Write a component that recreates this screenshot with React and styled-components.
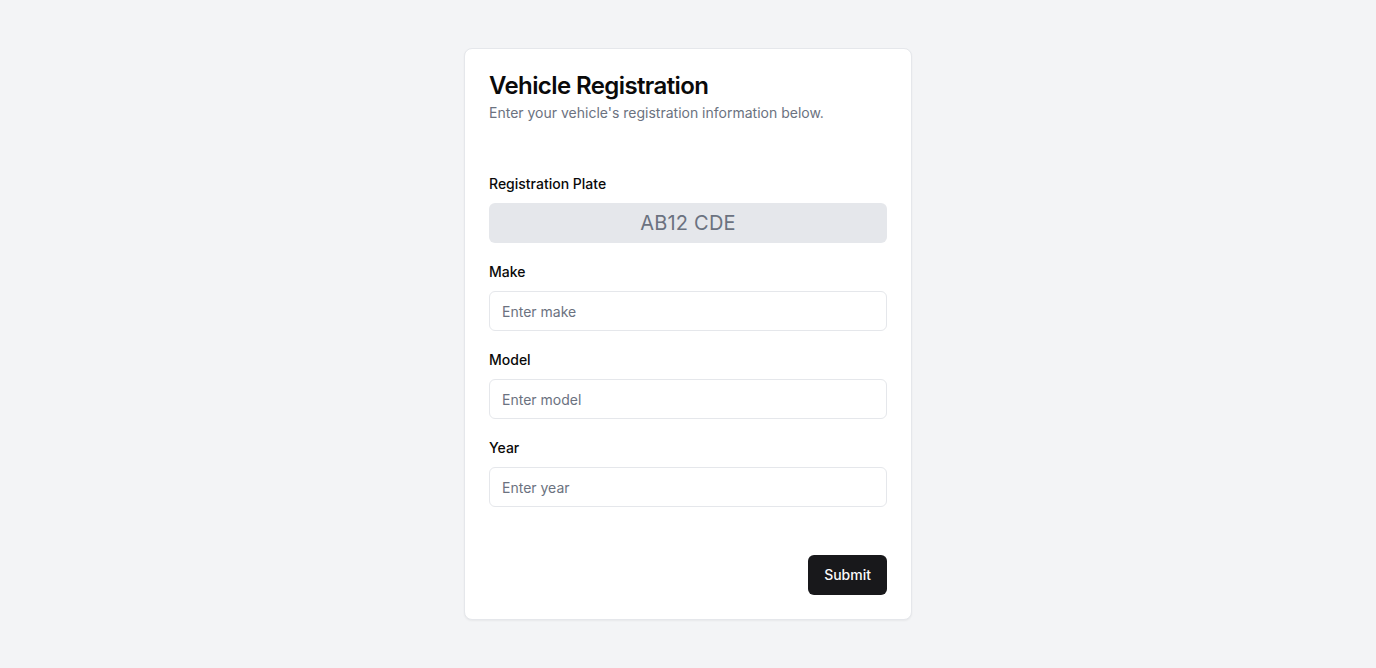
import React from 'react';
import styled, { createGlobalStyle } from 'styled-components';

const GlobalStyle = createGlobalStyle`
  * { box-sizing: border-box; }
  body {
    margin: 0;
    background: #f3f4f6;
    font-family: Inter, "Noto Sans", sans-serif;
    color: #0a0a0a;
  }
`;

const Page = styled.div`
  min-height: 668px;
  display: flex;
  justify-content: center;
  align-items: flex-start;
  padding-top: 48px;
`;

const Card = styled.form`
  width: 448px;
  background: #fff;
  border: 1px solid #e5e7eb;
  border-radius: 8px;
  box-shadow: 0 1px 2px rgba(0, 0, 0, 0.05);
  padding: 24px;
  display: flex;
  flex-direction: column;
`;

const Title = styled.h1`
  margin: 0;
  padding-top: 1px;
  font-size: 24px;
  line-height: 24px;
  font-weight: 600;
  letter-spacing: -0.6px;
`;

const Description = styled.p`
  margin: 5px 0 0;
  font-size: 14px;
  line-height: 20px;
  color: #6b7280;
`;

const Fields = styled.div`
  margin-top: 50px;
  display: flex;
  flex-direction: column;
  gap: 18px;
`;

const Field = styled.div`
  display: flex;
  flex-direction: column;
`;

const Label = styled.label`
  font-size: 14px;
  line-height: 20px;
  font-weight: 500;
  padding-top: 1px;
  margin-bottom: 9px;
`;

const Plate = styled.div`
  height: 40px;
  border-radius: 6px;
  background: #e5e7eb;
  color: #6b7280;
  font-size: 20px;
  display: flex;
  align-items: center;
  justify-content: center;
  letter-spacing: 0.2px;
`;

const Input = styled.input`
  height: 40px;
  border: 1px solid #e5e7eb;
  border-radius: 6px;
  padding: 0 12px;
  font-family: inherit;
  font-size: 14px;
  color: #0a0a0a;
  background: #fff;
  outline: none;
  &::placeholder { color: #6b7280; }
`;

const Footer = styled.div`
  margin-top: 48px;
  display: flex;
  justify-content: flex-end;
`;

const Button = styled.button`
  height: 40px;
  padding: 0 16px 1px;
  border: none;
  border-radius: 6px;
  background: #18181b;
  color: #fafafa;
  font-family: inherit;
  font-size: 14px;
  font-weight: 500;
  cursor: pointer;
`;

const fields = [
  { id: 'make', label: 'Make', placeholder: 'Enter make' },
  { id: 'model', label: 'Model', placeholder: 'Enter model' },
  { id: 'year', label: 'Year', placeholder: 'Enter year' },
];

export default function App() {
  return (
    <Page>
      <GlobalStyle />
      <Card onSubmit={e => e.preventDefault()}>
        <Title>Vehicle Registration</Title>
        <Description>Enter your vehicle's registration information below.</Description>
        <Fields>
          <Field>
            <Label>Registration Plate</Label>
            <Plate>AB12 CDE</Plate>
          </Field>
          {fields.map(f => (
            <Field key={f.id}>
              <Label htmlFor={f.id}>{f.label}</Label>
              <Input id={f.id} placeholder={f.placeholder} />
            </Field>
          ))}
        </Fields>
        <Footer>
          <Button type="submit">Submit</Button>
        </Footer>
      </Card>
    </Page>
  );
}
